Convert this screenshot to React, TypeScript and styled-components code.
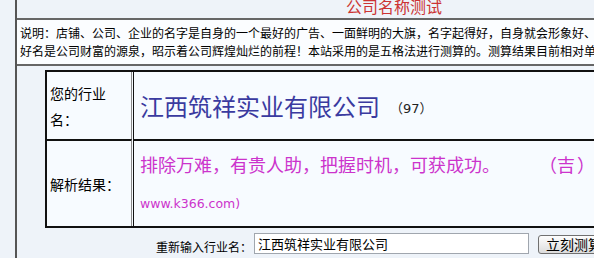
import React from "react";
import styled, { createGlobalStyle } from "styled-components";

const GlobalStyle = createGlobalStyle`
  html, body {
    margin: 0;
    padding: 0;
    overflow: hidden;
    background: #eef3f9;
  }
  body {
    font-family: "Noto Sans CJK SC", "Noto Sans", sans-serif;
    color: #000;
  }
`;

export const App = () => {
  return (
    <>
      <GlobalStyle />
      <Page>
        <Frame>
          <TitleBar>
            <Title>公司名称测试</Title>
          </TitleBar>
          <Desc>
            <DescLine>
              说明：店铺、公司、企业的名字是自身的一个最好的广告、一面鲜明的大旗，名字起得好，自身就会形象好、财源广进
            </DescLine>
            <DescLine>
              好名是公司财富的源泉，昭示着公司辉煌灿烂的前程！本站采用的是五格法进行测算的。测算结果目前相对单一，仅供参考
            </DescLine>
          </Desc>
          <Lower>
            <Grid>
              <LabelCell>您的行业名：</LabelCell>
              <ValueCell>
                <CompanyName>江西筑祥实业有限公司</CompanyName>
                <Score>（97）</Score>
              </ValueCell>
              <LabelCell $divider>解析结果：</LabelCell>
              <ValueCell $divider $stack>
                <Verdict>
                  排除万难，有贵人助，把握时机，可获成功。
                  <Luck>（吉 ）</Luck>
                </Verdict>
                <Source>www.k366.com)</Source>
              </ValueCell>
            </Grid>
            <FormRow>
              <FormLabel>重新输入行业名：</FormLabel>
              <NameInput defaultValue="江西筑祥实业有限公司" />
              <Submit>立刻测算</Submit>
            </FormRow>
          </Lower>
        </Frame>
      </Page>
    </>
  );
};

export default App;

const Page = styled.div`
  width: 800px;
  padding-left: 15px;
`;

const Frame = styled.div`
  width: 754px;
  border-left: 2px solid #555;
`;

const TitleBar = styled.div`
  height: 18px;
  overflow: hidden;
  text-align: center;
  background: #eef3f9;
  border-bottom: 2px solid #666;
`;

const Title = styled.div`
  margin-top: -3px;
  font-size: 16px;
  line-height: 18px;
  color: #cc3333;
`;

const Desc = styled.div`
  padding: 4px 0 4px 3px;
  background: #fbfdff;
  border-bottom: 2px solid #666;
  font-size: 12px;
  line-height: 18px;
`;

const DescLine = styled.div`
  white-space: nowrap;
`;

const Lower = styled.div`
  padding: 4px 0 0 28px;
  background: #eef3f9;
`;

const Grid = styled.div`
  width: 720px;
  display: grid;
  grid-template-columns: 85px 1fr;
  grid-template-rows: 67px 87px;
  column-gap: 1px;
  background: #f7fbff;
  border: 2px solid #111;
  border-right: none;
`;

const LabelCell = styled.div<{ $divider?: boolean }>`
  display: flex;
  align-items: center;
  padding: 0 4px 0 3px;
  font-size: 14px;
  line-height: 26px;
  border-right: 1px solid #8a8a8a;
  border-top: ${(p) => (p.$divider ? "2px solid #111" : "none")};
`;

const ValueCell = styled.div<{ $divider?: boolean; $stack?: boolean }>`
  display: flex;
  flex-direction: ${(p) => (p.$stack ? "column" : "row")};
  justify-content: ${(p) => (p.$stack ? "center" : "flex-start")};
  align-items: ${(p) => (p.$stack ? "flex-start" : "center")};
  padding-left: 6px;
  border-left: 1px solid #111;
  border-top: ${(p) => (p.$divider ? "2px solid #111" : "none")};
`;

const CompanyName = styled.span`
  font-size: 24px;
  color: #3a3aa0;
  white-space: nowrap;
`;

const Score = styled.span`
  margin-left: 10px;
  margin-top: 3px;
  font-family: "DejaVu Sans", "Noto Sans CJK SC", sans-serif;
  font-size: 13px;
  color: #222;
`;

const Verdict = styled.div`
  font-size: 18px;
  line-height: 40px;
  color: #cc33cc;
  white-space: nowrap;
`;

const Luck = styled.span`
  margin-left: 48px;
  word-spacing: -2px;
`;

const Source = styled.div`
  font-family: "DejaVu Sans", sans-serif;
  font-size: 12.5px;
  line-height: 40px;
  color: #cc33cc;
`;

const FormRow = styled.div`
  height: 31px;
  display: flex;
  align-items: center;
  margin-left: 111px;
`;

const FormLabel = styled.span`
  width: 96px;
  margin: 5px 2px 0 0;
  font-size: 12px;
  white-space: nowrap;
`;

const NameInput = styled.input`
  box-sizing: border-box;
  width: 275px;
  height: 21px;
  padding: 0 0 0 3px;
  border: 1px solid #a0a6ae;
  background: #fff;
  font-family: "Noto Sans CJK SC", sans-serif;
  font-size: 13px;
  color: #000;
  outline: none;
`;

const Submit = styled.button`
  box-sizing: border-box;
  height: 19px;
  margin: 2px 0 0 9px;
  padding: 0 7px;
  border: 1px solid #707070;
  border-radius: 3px;
  background: linear-gradient(#fdfdfd, #dcdcdc);
  font-family: "Noto Sans CJK SC", sans-serif;
  font-size: 14px;
  line-height: 17px;
  color: #000;
  white-space: nowrap;
`;
